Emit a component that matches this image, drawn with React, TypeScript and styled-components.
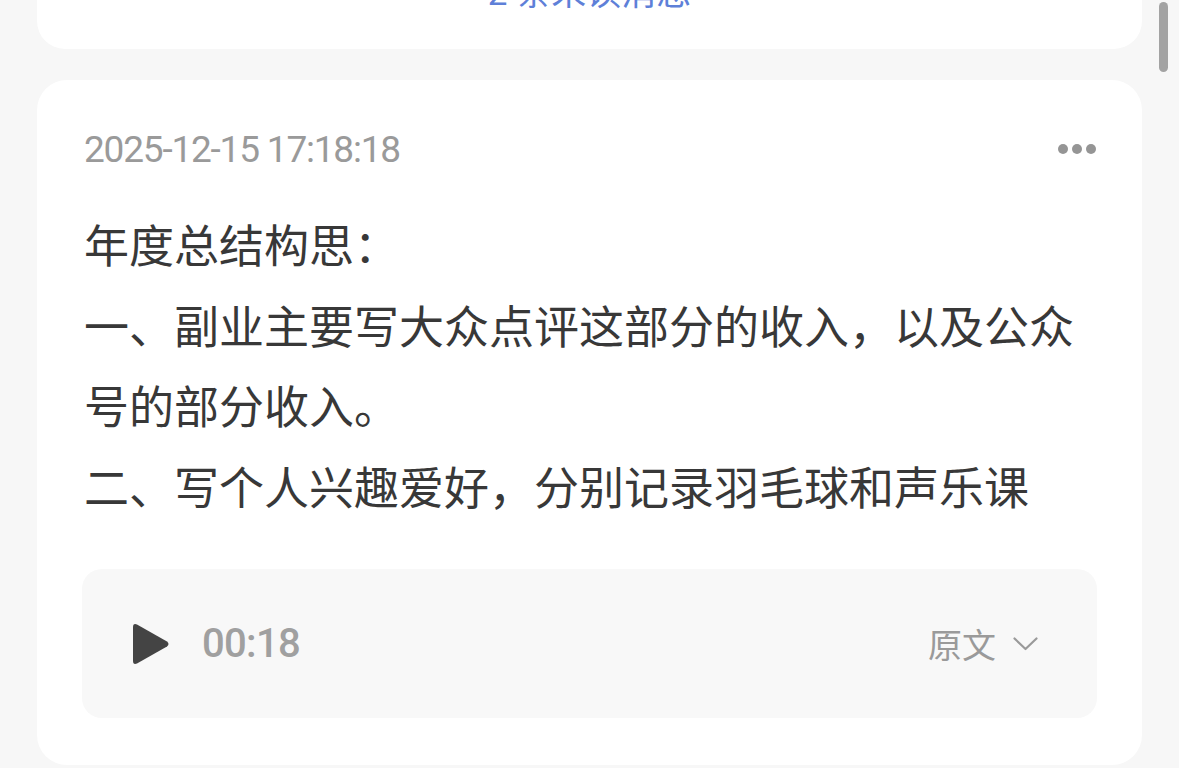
import React from "react"
import styled, { createGlobalStyle } from "styled-components"

const GlobalStyle = createGlobalStyle`
  html, body {
    margin: 0;
    padding: 0;
    background: #f7f7f7;
    overflow: hidden;
  }
  body {
    font-family: "Noto Sans CJK SC", "Noto Sans", sans-serif;
  }
`

const Page = styled.div`
  position: relative;
  height: 768px;
  padding: 0 37px;
  overflow: hidden;
  box-sizing: border-box;
`

const Card = styled.div`
  background: #fff;
  border-radius: 30px;
`

const TopCard = styled(Card)`
  margin-top: -28px;
  padding-bottom: 33px;
  text-align: center;
  border-radius: 0 0 28px 28px;
`

const UnreadLink = styled.span`
  display: block;
  font-size: 35px;
  line-height: 44px;
  color: #5e80d8;
  font-family: "Roboto", "Noto Sans CJK SC", sans-serif;
`

const NoteCard = styled(Card)`
  margin-top: 31px;
  padding: 44px 45px 47px;
`

const Header = styled.div`
  display: flex;
  align-items: center;
  justify-content: space-between;
  height: 50px;
`

const Timestamp = styled.span`
  font-family: "Roboto", "Noto Sans CJK SC", sans-serif;
  font-size: 37px;
  color: #9a9a9a;
  letter-spacing: -1.2px;
  padding-left: 2px;
`

const MoreButton = styled.div`
  display: flex;
  gap: 4px;
  margin-right: 1px;
`

const Dot = styled.span`
  width: 10px;
  height: 10px;
  border-radius: 50%;
  background: #959595;
`

const Body = styled.div`
  margin-top: 30px;
  font-size: 45px;
  line-height: 80.5px;
  color: #383838;
  padding-left: 2px;
`

const Player = styled.div`
  display: flex;
  align-items: center;
  margin-top: 43px;
  height: 149px;
  background: #f8f8f8;
  border-radius: 20px;
  padding: 0 59px 0 51px;
`

const PlayIcon = styled.svg`
  width: 37px;
  height: 42px;
  flex-shrink: 0;
`

const Duration = styled.span`
  margin-left: 32px;
  font-family: "Roboto", sans-serif;
  font-weight: 500;
  font-size: 40px;
  color: #a0a0a0;
  letter-spacing: -0.7px;
`

const Original = styled.div`
  margin-left: auto;
  display: flex;
  align-items: center;
  gap: 17px;
  font-size: 34px;
  color: #9a9a9a;
`

const Scrollbar = styled.div`
  position: absolute;
  top: 2px;
  right: 11px;
  width: 9px;
  height: 70px;
  border-radius: 5px;
  background: #a3a3a3;
`

export default function App() {
  return (
    <>
      <GlobalStyle />
      <Page>
        <TopCard>
          <UnreadLink>2 条未读消息</UnreadLink>
        </TopCard>
        <NoteCard>
          <Header>
            <Timestamp>2025-12-15 17:18:18</Timestamp>
            <MoreButton>
              <Dot />
              <Dot />
              <Dot />
            </MoreButton>
          </Header>
          <Body>
            年度总结构思：
            <br />
            一、副业主要写大众点评这部分的收入，以及公众号的部分收入。
            <br />
            二、写个人兴趣爱好，分别记录羽毛球和声乐课
          </Body>
          <Player>
            <PlayIcon viewBox="0 0 37 42">
              <path
                d="M4 1.5 L34 18.5 Q37 21 34 23.5 L4 40.5 Q0 42 0 38 L0 4 Q0 0 4 1.5 Z"
                fill="#444"
              />
            </PlayIcon>
            <Duration>00:18</Duration>
            <Original>
              原文
              <svg width="25" height="14" viewBox="0 0 25 14">
                <path
                  d="M1.5 1.5 L12.5 12 L23.5 1.5"
                  fill="none"
                  stroke="#9a9a9a"
                  strokeWidth="2.2"
                  strokeLinecap="round"
                  strokeLinejoin="round"
                />
              </svg>
            </Original>
          </Player>
        </NoteCard>
        <Scrollbar />
      </Page>
    </>
  )
}
